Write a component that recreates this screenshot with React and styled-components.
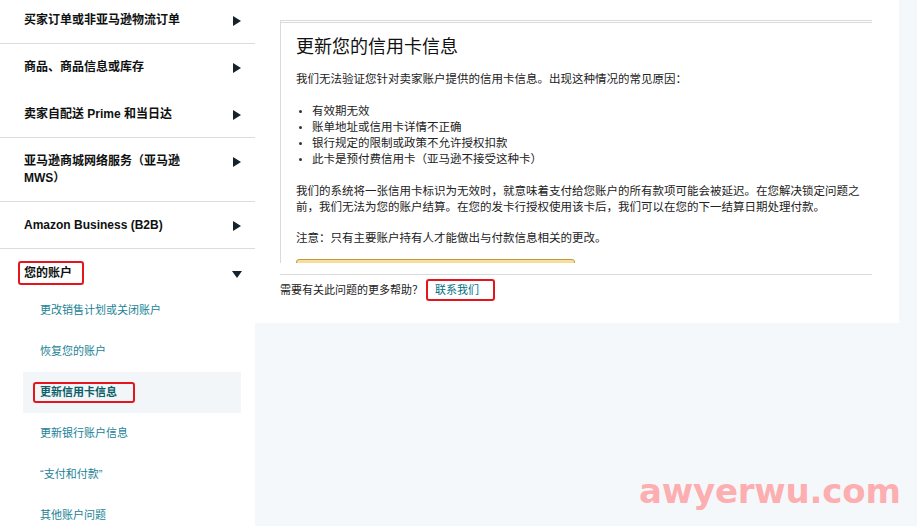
import React from 'react';
import styled, { createGlobalStyle } from 'styled-components';

const GlobalStyle = createGlobalStyle`
  html, body {
    margin: 0;
    padding: 0;
    background: #f5f8fa;
  }
  body {
    font-family: "Liberation Sans", Arial, "Noto Sans CJK SC", sans-serif;
    color: #111;
  }
`;

const Page = styled.div`
  display: flex;
  min-height: 526px;
  position: relative;
  overflow: hidden;
`;

const Sidebar = styled.nav`
  width: 255px;
  flex: none;
  background: #fff;
  min-height: 526px;
`;

const NavRow = styled.div`
  display: flex;
  align-items: flex-start;
  justify-content: space-between;
  padding: ${p => p.$top ?? 15}px 14px ${p => p.$bottom ?? 14}px 24px;
  border-bottom: ${p => (p.$line ? '1px solid #dcdcdc' : '1px solid transparent')};
  font-size: 12px;
  font-weight: bold;
  line-height: 17px;
  color: #0f1111;
`;

const NavLabel = styled.span`
  max-width: 170px;
`;

const Caret = styled.span`
  flex: none;
  width: 0;
  height: 0;
  margin-top: 4px;
  ${p =>
    p.$open
      ? `border-left: 5px solid transparent;
         border-right: 5px solid transparent;
         border-top: 7px solid #14232c;
         margin-top: 6px;
         margin-right: -1px;`
      : `border-top: 5px solid transparent;
         border-bottom: 5px solid transparent;
         border-left: 8px solid #14232c;`}
`;

const SubList = styled.div`
  display: flex;
  flex-direction: column;
  padding: 0 14px 0 23px;
`;

const SubItem = styled.div`
  padding: 12px 0 12px 17px;
  line-height: 17px;
  font-size: 11px;
  color: ${p => (p.$active ? '#0b5f6b' : '#1a8296')};
  font-weight: ${p => (p.$active ? 'bold' : 'normal')};
  background: ${p => (p.$active ? '#f3f6f8' : 'transparent')};
`;

const Marked = styled.span`
  position: relative;
  &::after {
    content: '';
    position: absolute;
    top: ${p => p.$t ?? -5}px;
    bottom: ${p => p.$b ?? -5}px;
    left: ${p => p.$l ?? -6}px;
    right: ${p => p.$r ?? -10}px;
    border: 2px solid #e4151c;
    border-radius: 3px;
    pointer-events: none;
  }
`;

const Main = styled.main`
  flex: 1;
  min-width: 0;
  padding-right: 18px;
`;

const Panel = styled.section`
  background: #fff;
  padding: 20px 27px 24px 25px;
`;

const Card = styled.div`
  height: 228px;
  overflow: hidden;
  border-top: 3px double #dadada;
  border-left: 1px solid #dadada;
  padding: 12px 24px 0 15px;
  margin-bottom: 11px;
`;

const Title = styled.h1`
  margin: 0 0 12px;
  font-size: 18px;
  line-height: 24px;
  font-weight: normal;
  color: #111;
`;

const Para = styled.p`
  margin: 0 0 ${p => p.$gap ?? 15}px;
  font-size: 11.5px;
  line-height: 16px;
  color: #222;
  white-space: nowrap;
`;

const Bullets = styled.ul`
  list-style: none;
  margin: 0 0 16px;
  padding: 0;
`;

const Bullet = styled.li`
  position: relative;
  padding-left: 16px;
  font-size: 11.5px;
  line-height: 16px;
  color: #222;
  &::before {
    content: '';
    position: absolute;
    left: 3px;
    top: 7px;
    width: 3px;
    height: 3px;
    border-radius: 50%;
    background: #333;
  }
`;

const YellowButton = styled.button`
  display: block;
  width: 279px;
  height: 30px;
  border: 1px solid #c49a3a;
  border-radius: 3px;
  background: linear-gradient(#f7dfa5, #f0c14b);
  padding: 0;
`;

const Footer = styled.div`
  border-top: 1px solid #dadada;
  padding-top: 7px;
  font-size: 11px;
  line-height: 17px;
  color: #222;
`;

const Link = styled.a`
  color: #007185;
  text-decoration: none;
  margin-left: 12px;
`;

const Watermark = styled.div`
  position: absolute;
  left: 639px;
  top: 471px;
  font-family: "DejaVu Sans", sans-serif;
  font-weight: bold;
  font-size: 34px;
  letter-spacing: -0.2px;
  color: #fcaeb0;
  pointer-events: none;
`;

const sections = [
  { label: '买家订单或非亚马逊物流订单', line: true, top: 12 },
  { label: '商品、商品信息或库存', line: false },
  { label: '卖家自配送 Prime 和当日达', line: true },
  { label: '亚马逊商城网络服务（亚马逊 MWS）', line: true },
  { label: 'Amazon Business (B2B)', line: true },
];

const accountItems = [
  '更改销售计划或关闭账户',
  '恢复您的账户',
  '更新信用卡信息',
  '更新银行账户信息',
  '“支付和付款”',
  '其他账户问题',
];

const App = () => {
  return (
    <Page>
      <GlobalStyle />
      <Sidebar>
        {sections.map(s => (
          <NavRow key={s.label} $line={s.line} $top={s.top}>
            <NavLabel>{s.label}</NavLabel>
            <Caret />
          </NavRow>
        ))}
        <NavRow $top={16} $bottom={7}>
          <NavLabel>
            <Marked $l={-6} $r={-12}>您的账户</Marked>
          </NavLabel>
          <Caret $open />
        </NavRow>
        <SubList>
          {accountItems.map(item =>
            item === '更新信用卡信息' ? (
              <SubItem key={item} $active>
                <Marked $l={-7} $r={-18} $t={-4} $b={-5}>{item}</Marked>
              </SubItem>
            ) : (
              <SubItem key={item}>{item}</SubItem>
            )
          )}
        </SubList>
      </Sidebar>

      <Main>
        <Panel>
          <Card>
            <Title>更新您的信用卡信息</Title>
            <Para $gap={16}>我们无法验证您针对卖家账户提供的信用卡信息。出现这种情况的常见原因：</Para>
            <Bullets>
              <Bullet>有效期无效</Bullet>
              <Bullet>账单地址或信用卡详情不正确</Bullet>
              <Bullet>银行规定的限制或政策不允许授权扣款</Bullet>
              <Bullet>此卡是预付费信用卡（亚马逊不接受这种卡）</Bullet>
            </Bullets>
            <Para>
              我们的系统将一张信用卡标识为无效时，就意味着支付给您账户的所有款项可能会被延迟。在您解决锁定问题之
              <br />
              前，我们无法为您的账户结算。在您的发卡行授权使用该卡后，我们可以在您的下一结算日期处理付款。
            </Para>
            <Para $gap={13}>注意：只有主要账户持有人才能做出与付款信息相关的更改。</Para>
            <YellowButton type="button" aria-label="更新" />
          </Card>
          <Footer>
            需要有关此问题的更多帮助？
            <Link href="#">
              <Marked $l={-9} $r={-16} $t={-5} $b={-5}>联系我们</Marked>
            </Link>
          </Footer>
        </Panel>
      </Main>

      <Watermark>awyerwu.com</Watermark>
    </Page>
  );
};

export default App;
